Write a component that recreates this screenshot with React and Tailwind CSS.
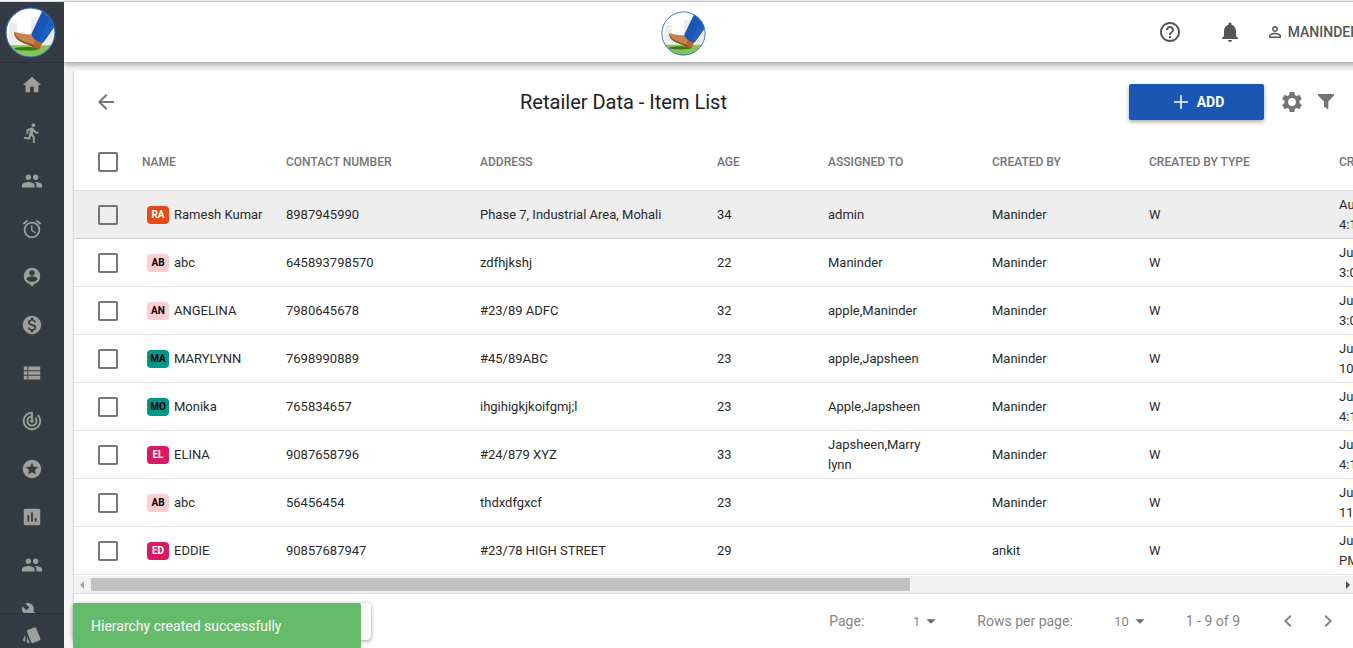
import {
  MdAlarm,
  MdArrowBack,
  MdArrowDropDown,
  MdAssessment,
  MdBuild,
  MdChevronLeft,
  MdChevronRight,
  MdDirectionsRun,
  MdHelpOutline,
  MdHome,
  MdMonetizationOn,
  MdNotifications,
  MdPeople,
  MdPermIdentity,
  MdStars,
  MdTrackChanges,
  MdViewList,
} from "react-icons/md";

function PersonPin({ className }) {
  return (
    <svg viewBox="0 0 24 24" fill="currentColor" className={className}>
      <path
        fillRule="evenodd"
        d="M12 2a9 9 0 0 0-9 9 9 9 0 0 0 6.500 8.700L12 22.500l2.500-2.800A9 9 0 0 0 21 11a9 9 0 0 0-9-9zm0 2.500a3 3 0 1 1 0 6 3 3 0 0 1 0-6zm0 13c-2.500 0-4.800-1.300-6-3.300.1-2 4-3 6-3s5.900 1 6 3a7 7 0 0 1-6 3.300z"
      />
    </svg>
  );
}

function Cards({ className }) {
  return (
    <svg viewBox="0 0 24 24" fill="currentColor" className={className}>
      <path d="M2.530 19.650l1.340.56v-9.030l-2.430 5.860c-.41 1.020.08 2.190 1.090 2.610zm19.500-3.700L17.070 3.980a2.013 2.013 0 0 0-2.600-1.080L7.100 5.950a1.999 1.999 0 0 0-1.080 2.600l4.960 11.970a1.998 1.998 0 0 0 2.600 1.080l7.360-3.050a1.994 1.994 0 0 0 1.090-2.600zM5.880 19.750c0 1.100.9 2 2 2h1.450l-3.450-8.340v6.340z" />
    </svg>
  );
}

function Gear({ className }) {
  return (
    <svg viewBox="0 0 24 24" fill="currentColor" className={className}>
      <path d="M19.430 12.980c.04-.32.07-.64.07-.98s-.03-.66-.07-.98l2.110-1.650c.19-.15.24-.42.12-.64l-2-3.460c-.12-.22-.39-.3-.61-.22l-2.490 1c-.52-.4-1.080-.73-1.690-.98l-.38-2.650C14.460 2.180 14.250 2 14 2h-4c-.25 0-.46.18-.49.42l-.38 2.650c-.61.25-1.170.59-1.690.98l-2.490-1c-.23-.09-.49 0-.61.22l-2 3.460c-.13.22-.07.49.12.64l2.110 1.650c-.04.32-.07.65-.07.98s.03.66.07.98l-2.110 1.650c-.19.15-.24.42-.12.64l2 3.460c.12.22.39.3.61.22l2.490-1c.52.4 1.080.73 1.690.98l.38 2.650c.03.24.24.42.49.42h4c.25 0 .46-.18.49-.42l.38-2.650c.61-.25 1.170-.59 1.690-.98l2.490 1c.23.09.49 0 .61-.22l2-3.460c.12-.22.07-.49-.12-.64l-2.110-1.650zM12 15.900a3.900 3.900 0 1 1 0-7.800 3.900 3.900 0 0 1 0 7.800z" />
    </svg>
  );
}

function Plus({ className }) {
  return (
    <svg viewBox="0 0 16 16" fill="none" stroke="currentColor" strokeWidth="1.500" className={className}>
      <path d="M8 1v14M1 8h14" />
    </svg>
  );
}

function Funnel({ className }) {
  return (
    <svg viewBox="0 0 16 16" fill="currentColor" className={className}>
      <path d="M0 0h16v1.500L10.300 7.500V15.500L6 12.500V7.500L0 1.500z" />
    </svg>
  );
}

function Logo({ className }) {
  return (
    <svg viewBox="0 0 50 50" className={className} aria-hidden="true">
      <defs>
        <clipPath id="logo-disc">
          <circle cx="25" cy="25" r="24" />
        </clipPath>
      </defs>
      <circle cx="25" cy="25" r="24" fill="#fff" />
      <g clipPath="url(#logo-disc)">
        <path d="M4 15.500h8V38H4zM15 24h5v14h-5zM25.500 10H34v28h-8.500zM38 24h10v14H38z" fill="#ececee" />
        <path d="M0 37.500h50V50H0z" fill="#84c553" />
        <ellipse cx="21.500" cy="41" rx="12.500" ry="1.700" fill="#357a1f" />
        <path d="M8.800 24.600c4.500.6 10.500 2.900 16.500 2.200L31 32l6 2.500-3.300 6.800c-3-.1-5.500-2.300-9-3.600C18.500 35.300 10 33 8.800 24.600z" fill="#c98248" />
        <path d="M8.800 24.600c2.200 6.200 8.200 9.400 16.700 11.700 4 1.100 6.500 2.900 9.100 3.400l-1 1.700c-4-.2-6-2.300-9-3.600C17 35.300 9 32.500 8.800 24.600z" fill="#82502c" />
        <path d="M29 32.500l8 2-3.300 6.800c-1.800-.2-3.200-1-5-2.200z" fill="#b5652f" />
        <path d="M37 3 25.800 26.500c1.200 4.300 5.200 8 11.700 8.300L50 17V3z" fill="#1a56b4" />
        <path d="m45 8-12 25.500c1.300.7 3 1.200 4.500 1.300L50 17z" fill="#1b60c2" />
      </g>
      <circle cx="25" cy="25" r="24" fill="none" stroke="#2f66b8" strokeWidth="1" />
    </svg>
  );
}

const navItems = [
  { label: "Home", icon: MdHome },
  { label: "Activity", icon: MdDirectionsRun },
  { label: "Teams", icon: MdPeople },
  { label: "Attendance", icon: MdAlarm },
  { label: "Visits", icon: PersonPin },
  { label: "Expenses", icon: MdMonetizationOn },
  { label: "Lists", icon: MdViewList },
  { label: "Tracking", icon: MdTrackChanges },
  { label: "Targets", icon: MdStars },
  { label: "Reports", icon: MdAssessment },
  { label: "Users", icon: MdPeople },
  { label: "Tools", icon: MdBuild },
];

const columns = [
  { label: "Name", width: "w-[144px]" },
  { label: "Contact Number", width: "w-[194px]" },
  { label: "Address", width: "w-[237px]" },
  { label: "Age", width: "w-[111px]" },
  { label: "Assigned To", width: "w-[164px]" },
  { label: "Created By", width: "w-[157px]" },
  { label: "Created By Type", width: "w-[190px]" },
  { label: "Created At", width: "w-[160px]" },
];

const badges = {
  orange: "bg-[#e64a19] text-white",
  pink: "bg-[#ffcdd2] text-black",
  teal: "bg-[#009688] text-black",
  magenta: "bg-[#d81b60] text-white",
};

const rows = [
  { tag: "RA", tone: "orange", name: "Ramesh Kumar", phone: "8987945990", address: "Phase 7, Industrial Area, Mohali", age: 34, assigned: "admin", by: "Maninder", at: ["Aug 5, 2021,", "4:12 PM"] },
  { tag: "AB", tone: "pink", name: "abc", phone: "645893798570", address: "zdfhjkshj", age: 22, assigned: "Maninder", by: "Maninder", at: ["Jul 28, 2021,", "3:05 PM"] },
  { tag: "AN", tone: "pink", name: "ANGELINA", phone: "7980645678", address: "#23/89 ADFC", age: 32, assigned: "apple,Maninder", by: "Maninder", at: ["Jul 28, 2021,", "3:04 PM"] },
  { tag: "MA", tone: "teal", name: "MARYLYNN", phone: "7698990889", address: "#45/89ABC", age: 23, assigned: "apple,Japsheen", by: "Maninder", at: ["Jul 28, 2021,", "10:45 AM"] },
  { tag: "MO", tone: "teal", name: "Monika", phone: "765834657", address: "ihgihigkjkoifgmj;l", age: 23, assigned: "Apple,Japsheen", by: "Maninder", at: ["Jul 27, 2021,", "4:16 PM"] },
  { tag: "EL", tone: "magenta", name: "ELINA", phone: "9087658796", address: "#24/879 XYZ", age: 33, assigned: "Japsheen,Marrylynn", by: "Maninder", at: ["Jul 27, 2021,", "4:15 PM"] },
  { tag: "AB", tone: "pink", name: "abc", phone: "56456454", address: "thdxdfgxcf", age: 23, assigned: "", by: "Maninder", at: ["Jul 27, 2021,", "11:30 AM"] },
  { tag: "ED", tone: "magenta", name: "EDDIE", phone: "90857687947", address: "#23/78 HIGH STREET", age: 29, assigned: "", by: "ankit", at: ["Jul 26, 2021, 1:20", "PM"] },
];

function Checkbox({ label }) {
  return (
    <input
      type="checkbox"
      aria-label={label}
      className="block h-5 w-5 appearance-none rounded-xs border-2 border-[#757575] checked:bg-[#1a56b4]"
    />
  );
}

function Sidebar() {
  return (
    <aside className="z-20 flex w-16 shrink-0 flex-col bg-[#343b44] text-[#9e9e9e]">
      <a href="#home" aria-label="Dashboard" className="flex h-[61px] shrink-0 items-center border-b border-[#2a3038] pl-[5px]">
        <Logo className="h-[51px] w-[51px]" />
      </a>
      <nav className="flex min-h-0 flex-1 flex-col items-center gap-6 overflow-hidden pt-[10px]">
        {navItems.map((item) => (
          <a key={item.label} href="#nav" aria-label={item.label} className="flex h-6 shrink-0 items-center">
            <item.icon className="h-[22px] w-[22px]" />
          </a>
        ))}
      </nav>
      <a href="#themes" aria-label="Themes" className="flex h-[35px] shrink-0 items-center justify-center border-t border-[#2a3038] pt-2">
        <Cards className="h-5 w-5" />
      </a>
    </aside>
  );
}

function TopBar() {
  return (
    <header className="z-10 grid h-[60px] shrink-0 grid-cols-[1fr_auto_1fr] items-center bg-white pr-[7px] text-[#555] shadow-[0_2px_6px_rgba(0,0,0,0.4)]">
      <span />
      <Logo className="mt-0.5 mr-14 h-[45px] w-[45px]" />
      <div className="flex items-center justify-end">
        <button type="button" aria-label="Help">
          <MdHelpOutline className="h-6 w-6" />
        </button>
        <button type="button" aria-label="Notifications" className="ml-9">
          <MdNotifications className="h-6 w-6" />
        </button>
        <button type="button" className="ml-6 flex items-center gap-1 text-sm font-medium">
          <MdPermIdentity className="h-[18px] w-[18px]" />
          MANINDER
        </button>
      </div>
    </header>
  );
}

function Toolbar() {
  return (
    <div className="flex h-16 items-center pr-8 pl-5 text-[#757575]">
      <button type="button" aria-label="Back">
        <MdArrowBack className="h-6 w-6" />
      </button>
      <h1 className="flex-1 text-center text-xl text-[#212121]">Retailer Data - Item List</h1>
      <button
        type="button"
        className="flex h-9 w-[135px] items-center justify-center gap-2 rounded-xs bg-[#1a56b4] pl-1 text-sm font-bold text-white shadow-[0_2px_4px_rgba(0,0,0,0.35)]"
      >
        <Plus className="h-4 w-4" />
        ADD
      </button>
      <button type="button" aria-label="Settings" className="ml-4">
        <Gear className="h-6 w-6" />
      </button>
      <button type="button" aria-label="Filter" className="ml-3.5">
        <Funnel className="h-4 w-4" />
      </button>
    </div>
  );
}

function ItemTable() {
  return (
    <div className="overflow-hidden">
      <table className="w-full min-w-[1425px] table-fixed border-separate border-spacing-0 text-left text-[13px] leading-5 text-[#2a2a2a]">
        <thead>
          <tr className="h-[57px] text-xs text-[#757575] shadow-[inset_0_-1px_0_#e0e0e0]">
            <th className="w-[68px] pb-0.5 pl-6">
              <Checkbox label="Select all" />
            </th>
            {columns.map((col) => (
              <th key={col.label} className={`${col.width} pb-0.5 font-medium uppercase`}>
                {col.label}
              </th>
            ))}
          </tr>
        </thead>
        <tbody>
          {rows.map((row, i) => (
            <tr
              key={row.phone}
              className={i === 0 ? "h-12 bg-[#eee] shadow-[inset_0_-1px_0_#d0d0d0]" : "h-12 shadow-[inset_0_-1px_0_#e0e0e0]"}
            >
              <td className="pl-6">
                <Checkbox label={`Select ${row.name}`} />
              </td>
              <td>
                <div className="flex items-center gap-[5px] pl-[5px] whitespace-nowrap">
                  <span className={`flex h-[18px] w-[22px] items-center justify-center rounded text-[10px] font-bold ${badges[row.tone]}`}>
                    {row.tag}
                  </span>
                  {row.name}
                </div>
              </td>
              <td>{row.phone}</td>
              <td>{row.address}</td>
              <td>{row.age}</td>
              <td className="pr-[70px] break-words">{row.assigned}</td>
              <td>{row.by}</td>
              <td>W</td>
              <td className="whitespace-nowrap">
                {row.at[0]}
                <br />
                {row.at[1]}
              </td>
            </tr>
          ))}
        </tbody>
      </table>
    </div>
  );
}

function ScrollTrack() {
  return (
    <div className="mr-[13px] flex h-[19px] items-center justify-between border-t border-b border-t-white border-b-[#e0e0e0] bg-[#f1f1f1] pr-[3px] pl-1.5">
      <svg viewBox="0 0 4 8" className="h-2 w-1 fill-[#a3a3a3]">
        <path d="M4 0v8L0 4z" />
      </svg>
      <div className="mx-[7px] flex-1">
        <div className="h-[13px] w-[65.6%] bg-[#c1c1c1]" />
      </div>
      <svg viewBox="0 0 4 8" className="h-2 w-1 fill-[#505050]">
        <path d="M0 0v8l4-4z" />
      </svg>
    </div>
  );
}

function PageSelect({ id, label, options }) {
  return (
    <div className="flex items-center">
      <label htmlFor={id}>{label}</label>
      <div className="flex w-[78px] items-center">
        <select id={id} className="w-full appearance-none pt-0.5 pr-5 text-right text-[13px]">
          {options.map((o) => (
            <option key={o}>{o}</option>
          ))}
        </select>
        <MdArrowDropDown className="pointer-events-none -ml-5 h-[22px] w-[22px] shrink-0 text-[#6b6b6b]" />
      </div>
    </div>
  );
}

function Pagination() {
  return (
    <footer className="flex h-[54px] items-center justify-end pr-[26px] text-sm text-[#858585]">
      <PageSelect id="page" label="Page:" options={[1]} />
      <span className="w-[35px]" />
      <PageSelect id="rows" label="Rows per page:" options={[10, 25, 50]} />
      <span className="ml-[35px]">1 - 9 of 9</span>
      <button type="button" aria-label="Previous page" className="ml-9">
        <MdChevronLeft className="h-6 w-6" />
      </button>
      <button type="button" aria-label="Next page" className="ml-4">
        <MdChevronRight className="h-6 w-6" />
      </button>
    </footer>
  );
}

export default function App() {
  return (
    <div className="relative h-screen overflow-hidden bg-[#f5f5f5] font-[Roboto,sans-serif]">
      <div className="flex h-full min-w-[1366px] border-t border-[#f5f5f5] bg-[#f5f5f5]">
        <div className="flex min-w-0 flex-1 border-t border-[#dcdcdc]">
          <Sidebar />
          <div className="flex min-w-0 flex-1 flex-col">
            <TopBar />
            <main className="mt-2 ml-[10px] flex-1 rounded-tl-xs bg-white shadow-[0_1px_3px_rgba(0,0,0,0.3)]">
              <Toolbar />
              <ItemTable />
              <ScrollTrack />
              <Pagination />
            </main>
          </div>
        </div>
      </div>

      <div className="absolute top-[603px] left-[73px] z-20 h-[37px] w-[298px] rounded bg-[#fafafa] shadow-[0_1px_4px_rgba(0,0,0,0.4)]" />
      <div
        role="status"
        className="absolute top-[603px] left-[73px] z-30 flex h-[46px] w-72 items-center rounded-t-xs bg-[#66bb6a] pl-[18px] text-sm text-white"
      >
        Hierarchy created successfully
      </div>
    </div>
  );
}
